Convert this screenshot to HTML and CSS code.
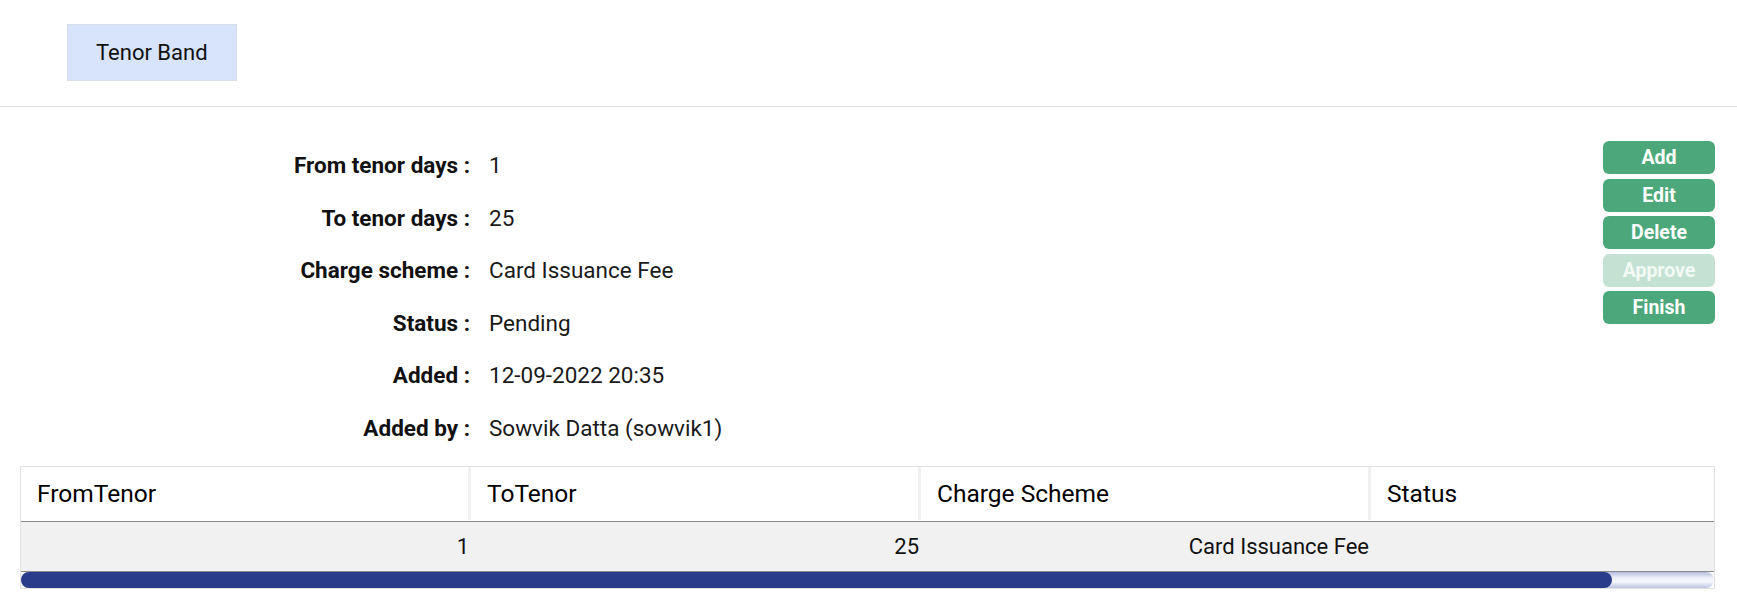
FILE: index.html
```html
<!DOCTYPE html>
<html lang="en">
<head>
  <meta charset="UTF-8" />
  <meta name="viewport" content="width=device-width, initial-scale=1.0" />
  <title>Tenor Band</title>
  <link rel="stylesheet" href="styles.css">
</head>
<body>
  <header class="topbar">
    <div class="tab">Tenor Band</div>
  </header>

  <main class="content">
    <section class="summary">
      <dl class="details">
        <dt>From tenor days :</dt>
        <dd>1</dd>

        <dt>To tenor days :</dt>
        <dd>25</dd>

        <dt>Charge scheme :</dt>
        <dd>Card Issuance Fee</dd>

        <dt>Status :</dt>
        <dd>Pending</dd>

        <dt>Added :</dt>
        <dd>12-09-2022 20:35</dd>

        <dt>Added by :</dt>
        <dd>Sowvik Datta (sowvik1)</dd>
      </dl>

      <div class="actions">
        <button class="btn">Add</button>
        <button class="btn">Edit</button>
        <button class="btn">Delete</button>
        <button class="btn" disabled>Approve</button>
        <button class="btn">Finish</button>
      </div>
    </section>

    <div class="grid-wrap">
      <div class="grid-view">
        <table class="grid">
          <thead>
            <tr>
              <th>FromTenor</th>
              <th>ToTenor</th>
              <th>Charge Scheme</th>
              <th>Status</th>
            </tr>
          </thead>
          <tbody>
            <tr>
              <td>1</td>
              <td>25</td>
              <td>Card Issuance Fee</td>
              <td></td>
            </tr>
          </tbody>
        </table>
      </div>
      <div class="scrollbar">
        <div class="scroll-thumb" style="width: 94%"></div>
      </div>
    </div>
  </main>
</body>
</html>
```

FILE: styles.css
```css
:root {
  --text-color: #111111;
  --line-color: #e2e2e2;
  --green: #4ca87a;
  --green-off: #c4e2d3;
  --tab-bg: #d7e4fb;
  --thumb: #293b8b;
}

body {
  margin: 0;
  color: var(--text-color);
  font-family: Roboto, 'Liberation Sans', sans-serif;
  background: #ffffff;
}

.topbar {
  padding: 24px 0 25px 67px;
  border-bottom: 1px solid var(--line-color);
}

.tab {
  display: inline-flex;
  align-items: center;
  height: 55px;
  padding: 0 28px;
  background-color: var(--tab-bg);
  border: 1px solid #d9dfe8;
  font-size: 22px;
}

.content {
  padding: 32px 22px 0 20px;
}

.summary {
  display: flex;
  justify-content: space-between;
  align-items: flex-start;
}

.details {
  display: grid;
  grid-template-columns: 450px auto;
  grid-auto-rows: 52.5px;
  align-items: center;
  column-gap: 19px;
  margin: 0;
  font-size: 22.5px;
}

.details dt {
  text-align: right;
  font-weight: bold;
}

.details dd {
  margin: 0;
  color: #1a1a1a;
}

.actions {
  display: flex;
  flex-direction: column;
  gap: 4.5px;
  margin-top: 2px;
  width: 112px;
}

.btn {
  height: 33px;
  padding: 0;
  border: none;
  border-radius: 6px;
  background-color: var(--green);
  color: #ffffff;
  font-family: inherit;
  font-size: 19.5px;
  font-weight: bold;
  cursor: pointer;
}

.btn:disabled {
  background-color: var(--green-off);
  color: #f3faf6;
  cursor: default;
}

.grid-wrap {
  margin-top: 12px;
  border: 1px solid var(--line-color);
}

.grid-view {
  overflow: hidden;
}

.grid {
  width: 1800px;
  table-layout: fixed;
  border-collapse: separate;
  border-spacing: 0;
  font-size: 22px;
}

.grid th {
  padding: 0 16px;
  line-height: 54px;
  text-align: left;
  font-weight: normal;
  font-size: 24.5px;
  color: #000000;
  border-bottom: 1px solid #8a8a8a;
  background: linear-gradient(#f0f0f0, #f0f0f0) no-repeat right top / 3px calc(100% - 1px);
}

.grid td {
  padding: 0 2px 0 0;
  line-height: 49px;
  text-align: right;
  background-color: #f1f1f1;
  border-bottom: 1px solid #8a8a8a;
}

.scrollbar {
  height: 16px;
  border-radius: 8px;
  background: linear-gradient(#b3bbe0, #eceef8 35%, #f7f8fc 60%, #bcc3e3);
}

.scroll-thumb {
  height: 100%;
  border-radius: 8px;
  background-color: var(--thumb);
}
```
